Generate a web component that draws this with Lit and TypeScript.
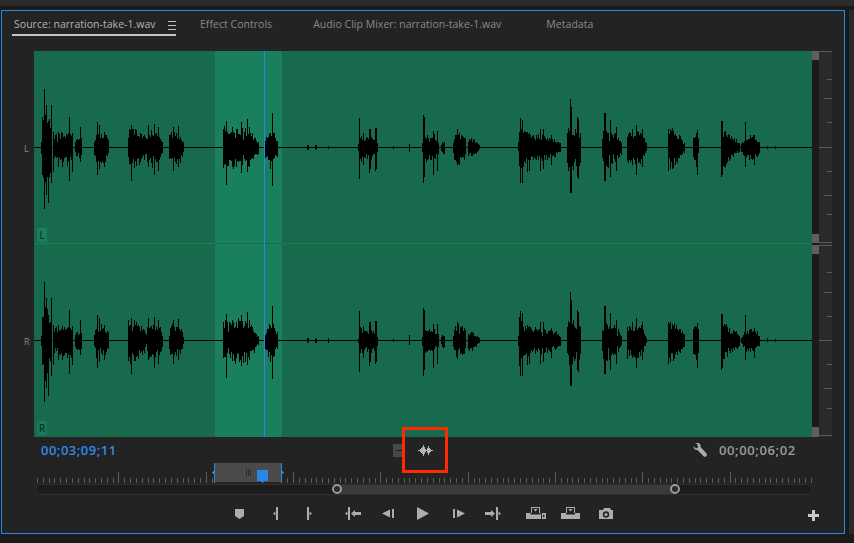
import { LitElement, html, css, svg } from "lit";
import { customElement } from "lit/decorators.js";

// envelope control points per burst: [x, height]
const BURSTS: number[][][] = [
  [[41, 6], [42, 28], [45, 32], [50, 24], [52, 8]],
  [[53, 9], [56, 12], [60, 13], [64, 12], [68, 15], [72, 13], [73, 3]],
  [[75, 6], [77, 8], [81, 8], [82, 3]],
  [[94, 6], [96, 14], [100, 15], [105, 12], [108, 8], [109, 2]],
  [[128, 18], [133, 18], [140, 14], [146, 8], [147, 12], [153, 17], [160, 12], [163, 4]],
  [[169, 11], [172, 14], [180, 12], [184, 3]],
  [[223, 18], [230, 17], [240, 19], [250, 14], [259, 4]],
  [[265, 8], [268, 15], [274, 14], [278, 5]],
  [[307, 2], [309, 2]], [[315, 2], [317, 2]], [[328, 2], [329, 2]], [[393, 1], [394, 1]], [[409, 4], [410, 3]],
  [[358, 3], [359, 14], [365, 8], [370, 12], [377, 7], [378, 3]],
  [[422, 4], [423, 14], [428, 10], [433, 13], [438, 5], [439, 1]],
  [[441, 3], [442, 6], [444, 6], [445, 2]],
  [[453, 5], [454, 11], [458, 15], [464, 11], [466, 6]],
  [[468, 8], [472, 8], [476, 5], [480, 1]],
  [[518, 5], [519, 22], [524, 14], [530, 12], [545, 10], [556, 8], [561, 4]],
  [[567, 14], [569, 22], [575, 16], [580, 15], [581, 2]],
  [[602, 10], [604, 18], [610, 15], [616, 12], [622, 4]],
  [[627, 14], [632, 12], [635, 14], [640, 15], [645, 6], [647, 1]],
  [[668, 14], [672, 17], [678, 12], [684, 6], [685, 2]],
  [[693, 12], [698, 13], [699, 2]],
  [[721, 12], [724, 16], [730, 10], [736, 8], [740, 3]],
  [[741, 3], [745, 8], [752, 11], [758, 7], [760, 2]],
  [[767, 2], [768, 2]], [[775, 1], [776, 1]],
];

// tall single columns: [x, up, down]
const SPIKES: number[][] = [
  [44, 58, 62], [46, 42, 48], [48, 22, 56], [51, 42, 36], [53, 15, 25], [58, 15, 20], [62, 14, 20], [69, 30, 34],
  [72, 14, 25], [80, 20, 15], [97, 25, 28], [99, 22, 22], [104, 15, 20], [131, 22, 34], [148, 22, 20], [154, 23, 28],
  [158, 20, 24], [173, 20, 24], [178, 21, 20], [226, 26, 38], [232, 20, 20], [241, 25, 26], [247, 28, 25], [249, 20, 20],
  [272, 34, 39], [270, 14, 22], [359, 29, 32], [363, 14, 18], [369, 18, 26], [370, 18, 22], [375, 19, 24], [376, 19, 22],
  [423, 32, 36], [424, 30, 30], [433, 16, 28], [437, 16, 24], [457, 18, 18], [520, 29, 36], [522, 27, 36], [527, 15, 25],
  [529, 14, 24], [540, 18, 24], [543, 18, 22], [551, 12, 18], [570, 48, 46], [571, 40, 46], [577, 30, 30], [578, 28, 32],
  [604, 34, 34], [605, 34, 34], [610, 27, 30], [616, 20, 24], [632, 18, 18], [636, 22, 28], [642, 18, 20], [668, 18, 24],
  [670, 18, 22], [697, 17, 28], [696, 13, 20], [721, 26, 30], [722, 26, 28], [745, 25, 20], [754, 12, 18],
];

function rng(seed: number) {
  return () => {
    seed = (seed + 0x6d2b79f5) | 0;
    let t = Math.imul(seed ^ (seed >>> 15), 1 | seed);
    t = (t + Math.imul(t ^ (t >>> 7), 61 | t)) ^ t;
    return ((t ^ (t >>> 14)) >>> 0) / 4294967296;
  };
}

function channelPath(mid: number, seed: number) {
  const rand = rng(seed);
  let d = "";
  for (const b of BURSTS) {
    for (let i = 0; i < b.length - 1; i++) {
      const [x0, h0] = b[i];
      const [x1, h1] = b[i + 1];
      for (let x = x0; x < x1; x++) {
        const h = h0 + ((h1 - h0) * (x - x0)) / (x1 - x0);
        // jagged columns, with an occasional deep notch between syllables
        const notch = rand() < 0.08 ? 0.6 : 1;
        const up = Math.round(h * (0.62 + 0.55 * rand()) * notch);
        const down = Math.round(h * (0.62 + 0.65 * rand()) * notch);
        d += `M${x - 34} ${mid - up}h1V${mid + down + 1}h-1z`;
      }
    }
  }
  for (const [x, up, down] of SPIKES) {
    d += `M${x - 34} ${mid - up}h1V${mid + down}h-1z`;
  }
  return d;
}

const ICON_FILL = "#adadad";
const transport = [
  { left: 228, art: svg`<path d="M7 4H16V11L11.5 14L7 11Z"/>` },
  { left: 265, art: svg`<path d="M11 2h2v13h-2zM10.4 6.5L8 8.5L10.4 10.5z"/>` },
  { left: 297, art: svg`<path d="M10 2h2v13h-2zM12.6 6.5L15 8.5L12.6 10.5z"/>` },
  { left: 342, art: svg`<path d="M6 2h2v13H6zM5.4 6.5L3 8.5L5.4 10.5zM9 8.5L13 5v2h6v3h-6v2z"/>` },
  { left: 375, art: svg`<path d="M7 8.5L15 4.5v8zM17 4h2v9h-2z"/>` },
  { left: 411, art: svg`<path d="M6 2L18 8.5L6 15z"/>` },
  { left: 447, art: svg`<path d="M6 4h2v9H6zM10 4.5L18 8.5L10 12.5z"/>` },
  { left: 480, art: svg`<path d="M15 8.5L11 5v2H5v3h6v2zM16 2h2v13h-2zM18.6 6.5L21 8.5L18.6 10.5z"/>` },
  {
    left: 524,
    art: svg`<path d="M7 2h9v6h-1V3H8v5H7zM9.5 4h4l-2 2.5zM2 8h4.5v1.5h10V8H17v6H2zM18 8h4v6h-4z"/>
      <path d="M19 9.2l2 1.8-2 1.8z" fill="#232323"/>`,
  },
  { left: 559, art: svg`<path d="M7 2h9v6h-1V3H8v5H7zM9.5 4h4l-2 2.5zM2 8h5v1.5h9V8h5v6H2z"/>` },
  {
    left: 594,
    art: svg`<path d="M10 3h6l1 2h2v9H5V5h4z"/><circle cx="12" cy="9.5" r="3.2" fill="#232323"/><circle cx="12" cy="9.5" r="1.6"/>`,
  },
  { left: 801, art: svg`<path d="M11 5h3v4h4v3h-4v4h-3v-4H7V9h4z" fill="#c8c8c8"/>` },
];

@customElement("app-root")
export class AppRoot extends LitElement {
  static styles = css`
    :host {
      display: block;
      width: 854px;
      height: 543px;
      overflow: hidden;
      background: #1a1a1a;
      font-family: "Open Sans", "Noto Sans", sans-serif;
    }
    .topstrip {
      height: 6px;
      background: #2b2b2b;
    }
    .workspace {
      display: flex;
      margin-top: 4px;
      padding-left: 1px;
      height: 524px;
    }
    .panel {
      position: relative;
      box-sizing: border-box;
      width: 844px;
      height: 524px;
      border: 1px solid #2a86e8;
      background: #232323;
    }
    .siderail {
      width: 5px;
      margin-left: 4px;
      background: #2a2a2a;
    }
    .tabs {
      display: flex;
      height: 40px;
      box-sizing: border-box;
      padding-left: 10px;
      font-size: 10.5px;
      letter-spacing: 0.03px;
      color: #8a8a8a;
    }
    .tab {
      height: 25px;
      line-height: 26px;
      white-space: nowrap;
    }
    .tab.active {
      display: flex;
      width: 164px;
      box-sizing: border-box;
      padding-left: 2px;
      border-bottom: 2px solid #c4c4c4;
      color: #b4b4b4;
    }
    .burger {
      width: 8px;
      height: 7px;
      margin: 10px 0 0 auto;
      border-top: 1px solid #c0c0c0;
      border-bottom: 1px solid #c0c0c0;
      position: relative;
    }
    .burger::after {
      content: "";
      position: absolute;
      left: 0;
      right: 0;
      top: 3px;
      height: 1px;
      background: #c0c0c0;
    }
    .t1 { margin-left: 24px; }
    .t2 { margin-left: 41px; }
    .t3 { margin-left: 45px; }
    .main {
      display: flex;
      height: 386px;
    }
    .labels {
      width: 32px;
      position: relative;
      color: #8a8a8a;
      font-size: 9px;
    }
    .labels span {
      position: absolute;
      left: 22px;
    }
    .labels .l { top: 91px; }
    .labels .r { top: 284px; }
    .wave {
      position: relative;
      width: 778px;
      height: 386px;
      flex: none;
    }
    .wave svg {
      display: block;
    }
    .chip {
      position: absolute;
      left: 3px;
      width: 10px;
      height: 14px;
      line-height: 15px;
      text-align: center;
      background: #1a7f5c;
      color: #08241a;
      font-size: 10px;
    }
    .chip.l { top: 177px; }
    .chip.r { top: 370px; background: #187a57; }
    .rail {
      position: relative;
      width: 7px;
      background: #1b1b1b;
      flex: none;
    }
    .grip {
      position: absolute;
      left: 0;
      width: 8px;
      background: #5f5f5f;
    }
    .meter {
      position: relative;
      width: 13px;
      background: #2a2a2a;
      flex: none;
    }
    .tick {
      position: absolute;
      right: 0;
      height: 1px;
      background: #5a5a5a;
    }
    .tick.s { width: 5px; }
    .tick.m { width: 8px; }
    .tick.f { width: 13px; }
    .timebar {
      display: flex;
      align-items: center;
      height: 26px;
      padding-left: 39px;
      font-weight: 600;
      font-size: 13px;
    }
    .current {
      width: 352px;
      color: #2d8ceb;
      letter-spacing: 0.5px;
    }
    .fold {
      position: relative;
      width: 9px;
      height: 13px;
      background: #484848;
    }
    .fold::after {
      content: "";
      position: absolute;
      left: 3px;
      right: 0;
      top: 6px;
      height: 1px;
      background: #1c1c1c;
    }
    .wavebtn {
      margin-left: 16px;
      display: block;
    }
    .wrench {
      margin-left: 260px;
      display: block;
    }
    .duration {
      margin-left: 12px;
      color: #9a9a9a;
      letter-spacing: 0.6px;
    }
    .annotation {
      position: absolute;
      left: 400px;
      top: 416px;
      width: 46px;
      height: 46px;
      box-sizing: border-box;
      border: 3px solid #ff2a00;
    }
    .minimap {
      position: relative;
      height: 21px;
    }
    .minimap svg {
      display: block;
    }
    .scroll {
      position: relative;
      box-sizing: border-box;
      width: 777px;
      height: 11px;
      margin-left: 33px;
      border: 1px solid #2f2f2f;
      border-radius: 6px;
      background: #1c1c1c;
    }
    .thumb {
      position: absolute;
      left: 301px;
      width: 338px;
      top: 0;
      bottom: 0;
      background: #3a3a3a;
    }
    .knob {
      position: absolute;
      top: -1px;
      width: 10px;
      height: 10px;
      box-sizing: border-box;
      border: 2px solid #9a9a9a;
      border-radius: 50%;
      background: #2a2a2a;
    }
    .knob.a { left: -5px; }
    .knob.b { right: -5px; }
    .transport {
      display: flex;
      margin-top: 10px;
    }
    .transport svg {
      display: block;
      flex: none;
    }
  `;

  private renderWave() {
    return html`<svg width="778" height="386" viewBox="0 0 778 386" shape-rendering="crispEdges">
      <rect width="778" height="386" fill="#176a4c" />
      <rect x="181" width="67" height="386" fill="#1a7f5c" />
      <rect y="192" width="181" height="1" fill="#1f7f5b" />
      <rect x="181" y="192" width="67" height="1" fill="#176a4c" />
      <rect x="248" y="192" width="530" height="1" fill="#1f7f5b" />
      <rect y="96" width="778" height="1" fill="#000" />
      <rect y="289" width="778" height="1" fill="#000" />
      <path d=${channelPath(96, 11)} fill="#000" />
      <path d=${channelPath(289, 29)} fill="#000" />
      <rect x="230" width="1" height="386" fill="#2a86e8" />
    </svg>`;
  }

  private renderMinimap() {
    const ticks = [];
    for (let i = 0; i < 134; i++) {
      const x = Math.round(35 + i * 5.82);
      if (x >= 212 && x <= 280) continue;
      const tall = (i - 14) % 15 === 0;
      ticks.push(svg`<rect x=${x} y=${tall ? 9 : 15} width="1" height=${tall ? 11 : 5} fill="#5c5c5c" />`);
    }
    return html`<svg width="842" height="21" viewBox="0 0 842 21" shape-rendering="crispEdges">
      ${ticks}
      <rect x="212" y="0" width="67" height="19" fill="#4a4a4a" />
      <rect x="212" y="0" width="1" height="20" fill="#2a86e8" />
      <rect x="279" y="0" width="1" height="20" fill="#2a86e8" />
      <path d="M212 8l-2 1.5 2 1.5zM280 8l2 1.5-2 1.5z" fill="#2a86e8" />
      <path d="M244 6h1v7h-1zM246 6h1v7h-1zM248 6h1v7h-1z" fill="#2a2a2a" />
      <path d="M255 7h11v11h-3l-2.5 2-2.5-2h-3z" fill="#2a86e8" />
    </svg>`;
  }

  render() {
    const ticks = [
      [79, "s"], [98, "m"], [122, "s"], [147, "f"], [171, "s"], [195, "m"], [214, "s"], [242, "f"], [245, "f"],
      [272, "s"], [292, "m"], [316, "s"], [340, "f"], [364, "s"], [388, "m"], [408, "s"], [435, "f"], [51, "f"],
    ] as [number, string][];
    return html`
      <div class="topstrip"></div>
      <div class="workspace">
        <div class="panel">
          <div class="tabs">
            <div class="tab active">Source: narration-take-1.wav<span class="burger"></span></div>
            <div class="tab t1">Effect Controls</div>
            <div class="tab t2">Audio Clip Mixer: narration-take-1.wav</div>
            <div class="tab t3">Metadata</div>
          </div>
          <div class="main">
            <div class="labels"><span class="l">L</span><span class="r">R</span></div>
            <div class="wave">
              ${this.renderWave()}
              <div class="chip l">L</div>
              <div class="chip r">R</div>
            </div>
            <div class="rail">
              <div class="grip" style="top:0;height:9px"></div>
              <div class="grip" style="top:183px;height:9px"></div>
              <div class="grip" style="top:194px;height:9px"></div>
              <div class="grip" style="top:376px;height:10px"></div>
            </div>
            <div class="meter">
              ${ticks.map(([y, k]) => html`<div class="tick ${k}" style="top:${y - 51}px"></div>`)}
            </div>
          </div>
          <div class="timebar">
            <div class="current">00;03;09;11</div>
            <div class="fold"></div>
            <svg class="wavebtn" width="15" height="11" viewBox="0 0 15 11" fill="#b4b4b4">
              <path d="M0 5h15v1H0zM2 4h1v3H2zM3 3h1v5H3zM4 2h1v7H4zM5 0h1v11H5zM6 2h1v7H6zM7 4h1v3H7zM9 3h1v5H9zM10 1h1v9h-1zM11 3h1v5h-1zM12 4h1v3h-1z" />
            </svg>
            <svg class="wrench" width="14" height="14" viewBox="0 0 14 14" fill="#adadad">
              <path d="M0.5 3L3 5.5L5 4.5L4.5 1.5L2.5 0H5C7 0 8 2 7.5 4L13.5 10.5C14.3 11.5 14 12.5 13.3 13.3C12.5 14 11.5 14 10.5 13.2L4.5 7C2.5 7.5 0.5 6 0.5 3Z" />
            </svg>
            <div class="duration">00;00;06;02</div>
          </div>
          <div class="minimap">${this.renderMinimap()}</div>
          <div class="scroll">
            <div class="thumb"><span class="knob a"></span><span class="knob b"></span></div>
          </div>
          <div class="transport">
            ${transport.map((icon, i) => {
              const gap = i === 0 ? icon.left - 2 : icon.left - transport[i - 1].left - 24;
              return html`<svg width="24" height="17" viewBox="0 0 24 17" fill=${ICON_FILL} style="margin-left:${gap}px">
                ${icon.art}
              </svg>`;
            })}
          </div>
          <div class="annotation"></div>
        </div>
        <div class="siderail"></div>
      </div>
    `;
  }
}
